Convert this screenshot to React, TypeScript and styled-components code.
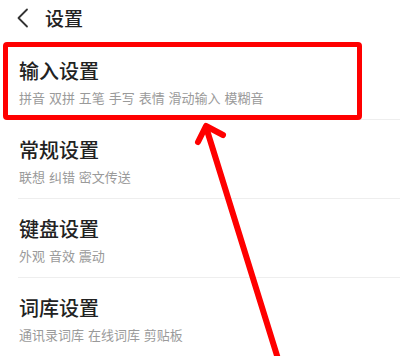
import styled, { createGlobalStyle } from 'styled-components';

const GlobalStyle = createGlobalStyle`
	html, body {
		margin: 0;
		padding: 0;
		background: #ffffff;
	}
	body {
		font-family: "Noto Sans CJK SC", "Noto Sans", sans-serif;
		color: #222222;
	}
`;

const Page = styled.div`
	position: relative;
	width: 400px;
	height: 356px;
	overflow: hidden;
	background: #ffffff;
`;

const Header = styled.div`
	display: flex;
	align-items: center;
	gap: 15px;
	height: 41px;
	padding: 0 0 6px 16px;
	box-sizing: border-box;
`;

const BackIcon = styled.svg`
	width: 14px;
	height: 20px;
	display: block;
`;

const HeaderTitle = styled.h1`
	margin: 0;
	font-size: 19px;
	font-weight: 500;
	line-height: 22px;
	color: #222222;
`;

const List = styled.ul`
	list-style: none;
	margin: 0;
	padding: 0;
`;

const Row = styled.li`
	display: flex;
	flex-direction: column;
	gap: 8px;
	margin-left: 18px;
	padding: 19px 0 13px 1px;
	border-bottom: 1px solid ${props => (props.$last ? 'transparent' : '#eeeeee')};
`;

const Title = styled.div`
	font-size: 20px;
	font-weight: 500;
	line-height: 22px;
	color: #222222;
`;

const Sub = styled.div`
	font-size: 13px;
	line-height: 16px;
	color: #9a9a9a;
	word-spacing: 1px;
`;

const Highlight = styled.div`
	position: absolute;
	left: 3px;
	top: 42px;
	width: 359px;
	height: 78px;
	box-sizing: border-box;
	border: 5px solid #ff0000;
	border-radius: 4px;
	pointer-events: none;
`;

const Arrow = styled.svg`
	position: absolute;
	left: 0;
	top: 0;
	width: 400px;
	height: 356px;
	pointer-events: none;
`;

const items = [
	{ title: '输入设置', sub: '拼音 双拼 五笔 手写 表情 滑动输入 模糊音' },
	{ title: '常规设置', sub: '联想 纠错 密文传送' },
	{ title: '键盘设置', sub: '外观 音效 震动' },
	{ title: '词库设置', sub: '通讯录词库 在线词库 剪贴板' },
];

export default function App() {
	return (
		<Page>
			<GlobalStyle />
			<Header>
				<BackIcon viewBox="0 0 14 20">
					<polyline points="11,1.5 2.5,10 11,18.5" fill="none" stroke="#333" strokeWidth="1.8" strokeLinecap="round" strokeLinejoin="round" />
				</BackIcon>
				<HeaderTitle>设置</HeaderTitle>
			</Header>
			<List>
				{items.map((it, i) => (
					<Row key={it.title} $last={i === items.length - 1}>
						<Title>{it.title}</Title>
						<Sub>{it.sub}</Sub>
					</Row>
				))}
			</List>
			<Highlight />
			<Arrow viewBox="0 0 400 356">
				<g fill="none" stroke="#ff0000" strokeWidth="6" strokeLinecap="round" strokeLinejoin="round">
					<line x1="279" y1="362" x2="206" y2="127" />
					<polyline points="198,142 206,126 223,135" />
				</g>
			</Arrow>
		</Page>
	);
}
